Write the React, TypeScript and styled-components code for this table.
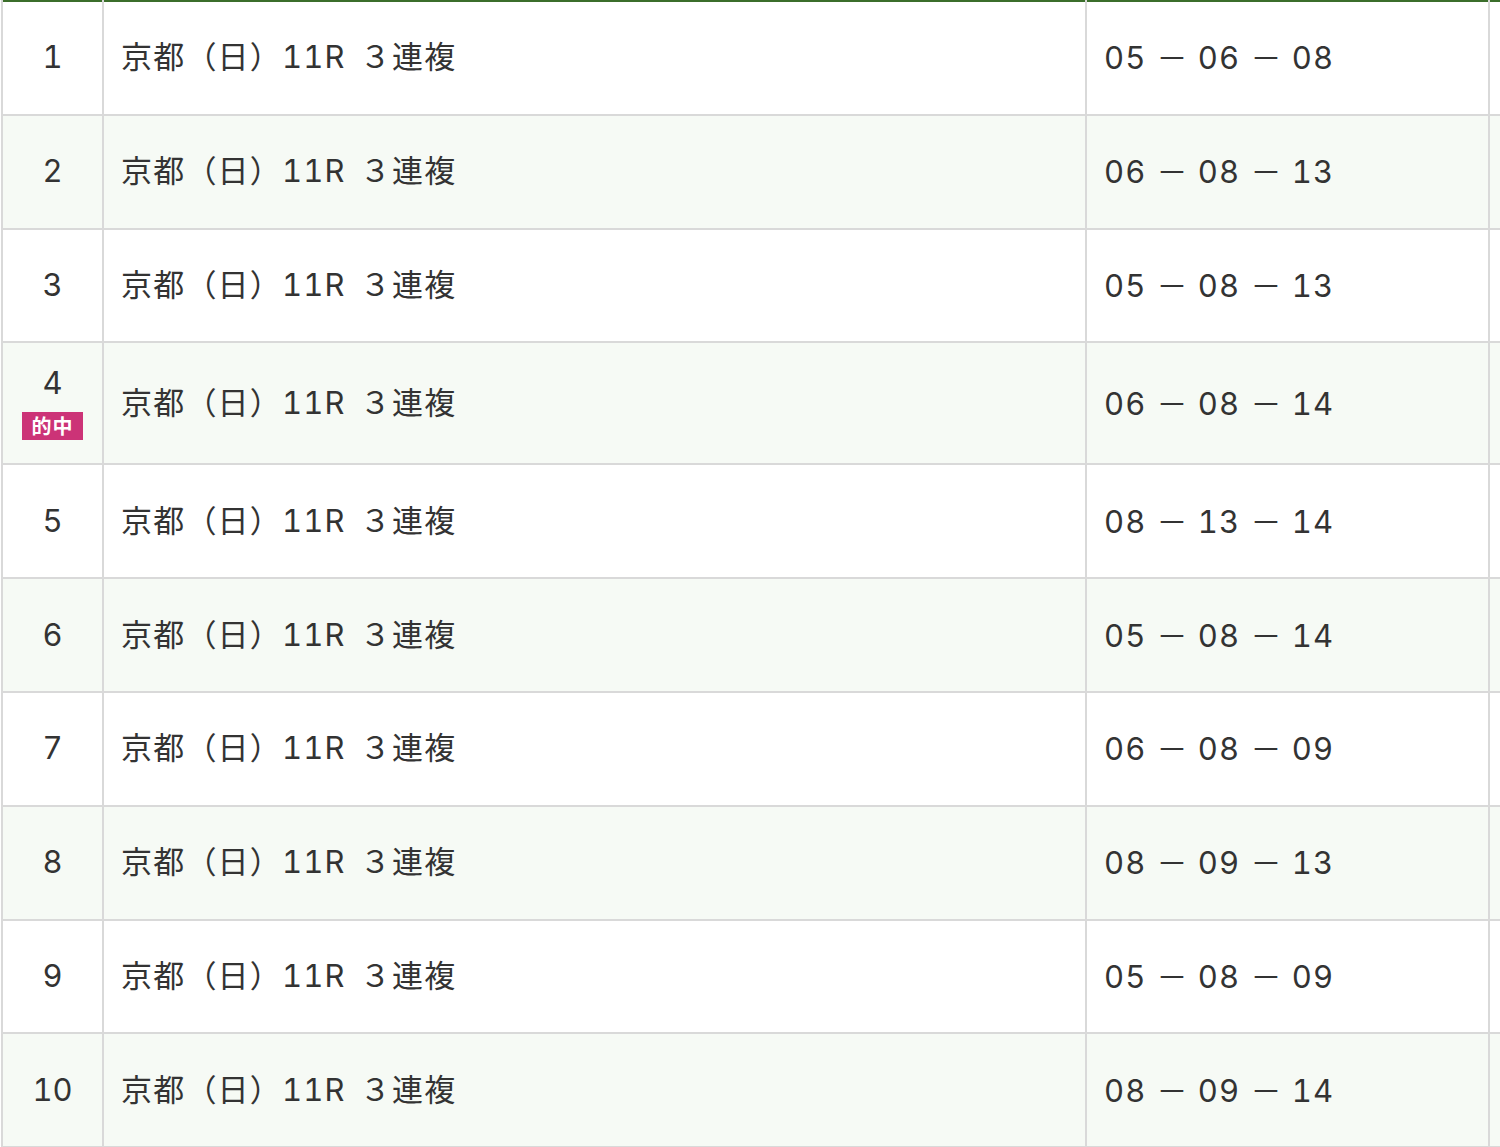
import styled, { createGlobalStyle } from 'styled-components';

const GlobalStyle = createGlobalStyle`
  html, body {
    margin: 0;
    padding: 0;
    background: #fff;
    overflow: hidden;
  }
  body {
    font-family: Inter, "Noto Sans CJK JP", sans-serif;
    font-variant-numeric: tabular-nums;
    color: #333;
  }
`;

const Wrapper = styled.div`
  width: 1800px;
  padding-left: 1px;
`;

const Table = styled.table`
  width: 1800px;
  border-collapse: collapse;
  table-layout: fixed;
  border-top: 2px solid #3b6e2b;
`;

const Row = styled.tr<{ $striped: boolean }>`
  height: 113.8px;
  background: ${(p) => (p.$striped ? '#f6faf5' : '#fff')};
`;

const Cell = styled.td`
  border: 2px solid #d9d9d9;
  border-top: none;
  padding: 21px 17px 23px;
  font-size: 31px;
  line-height: 37px;
  vertical-align: middle;
  white-space: nowrap;
`;

const NumCell = styled(Cell)`
  padding: 21px 0 23px;
  text-align: center;
`;

const NumStack = styled.div`
  display: flex;
  flex-direction: column;
  align-items: center;
  gap: 11px;
`;

const HitBadge = styled.span`
  display: inline-flex;
  align-items: center;
  justify-content: center;
  width: 61px;
  height: 28px;
  background: #cc3377;
  color: #fff;
  font-family: "Noto Sans CJK JP", sans-serif;
  font-size: 20px;
  font-weight: 700;
  line-height: 28px;
  letter-spacing: 1px;
`;

const Race = styled.span`
  letter-spacing: 1.2px;
`;

const Gap = styled.span`
  display: inline-block;
  width: 14px;
`;

const Combo = styled.span`
  letter-spacing: 1.2px;
`;

const Dash = styled.span`
  font-family: "Noto Sans CJK JP", sans-serif;
  margin: 0 9px 0 10px;
`;

type Bet = { combo: [string, string, string]; hit?: boolean };

const bets: Bet[] = [
  { combo: ['05', '06', '08'] },
  { combo: ['06', '08', '13'] },
  { combo: ['05', '08', '13'] },
  { combo: ['06', '08', '14'], hit: true },
  { combo: ['08', '13', '14'] },
  { combo: ['05', '08', '14'] },
  { combo: ['06', '08', '09'] },
  { combo: ['08', '09', '13'] },
  { combo: ['05', '08', '09'] },
  { combo: ['08', '09', '14'] },
];

const App = () => {
  return (
    <>
      <GlobalStyle />
      <Wrapper>
        <Table>
          <colgroup>
            <col style={{ width: 101 }} />
            <col style={{ width: 983 }} />
            <col style={{ width: 403 }} />
            <col />
          </colgroup>
          <tbody>
            {bets.map((b, i) => (
              <Row key={i} $striped={i % 2 === 1}>
                <NumCell>
                  <NumStack>
                    <span>{i + 1}</span>
                    {b.hit && <HitBadge>的中</HitBadge>}
                  </NumStack>
                </NumCell>
                <Cell>
                  <Race>
                    京都（日）11R
                    <Gap />
                    ３連複
                  </Race>
                </Cell>
                <Cell>
                  <Combo>
                    {b.combo[0]}
                    <Dash>－</Dash>
                    {b.combo[1]}
                    <Dash>－</Dash>
                    {b.combo[2]}
                  </Combo>
                </Cell>
                <Cell />
              </Row>
            ))}
          </tbody>
        </Table>
      </Wrapper>
    </>
  );
};

export default App;
